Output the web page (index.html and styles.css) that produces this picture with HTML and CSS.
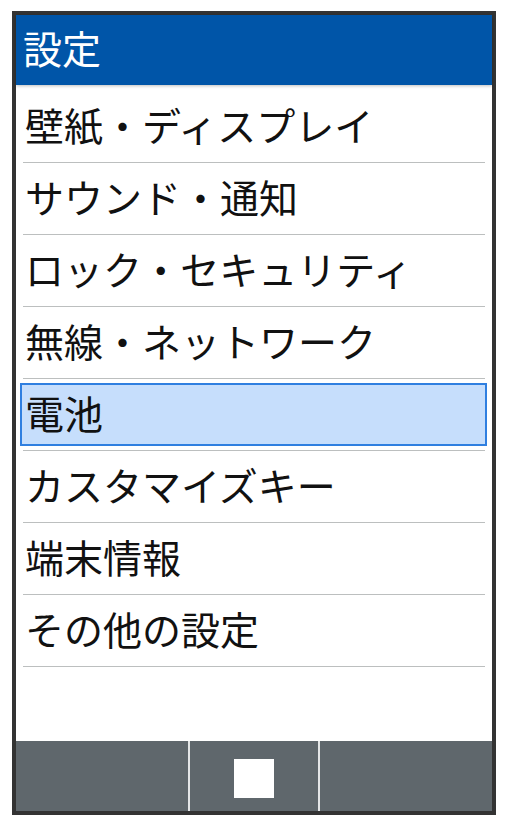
FILE: index.html
```html
<!DOCTYPE html>
<html lang="ja">
<head>
  <meta charset="UTF-8">
  <meta name="viewport" content="width=device-width, initial-scale=1.0">
  <title>設定</title>
  <link rel="stylesheet" href="styles.css">
</head>
<body>
  <div class="phone">
    <header class="title-bar">
      <h1>設定</h1>
    </header>

    <ul class="menu">
      <li class="menu-item"><span>壁紙・ディスプレイ</span></li>
      <li class="menu-item"><span>サウンド・通知</span></li>
      <li class="menu-item"><span>ロック・セキュリティ</span></li>
      <li class="menu-item"><span>無線・ネットワーク</span></li>
      <li class="menu-item selected"><span>電池</span></li>
      <li class="menu-item"><span>カスタマイズキー</span></li>
      <li class="menu-item"><span>端末情報</span></li>
      <li class="menu-item"><span>その他の設定</span></li>
    </ul>

    <footer class="soft-keys">
      <div class="soft-key"></div>
      <div class="soft-key center"><span class="stop-icon"></span></div>
      <div class="soft-key"></div>
    </footer>
  </div>
</body>
</html>
```

FILE: styles.css
```css
* {
  box-sizing: border-box;
  margin: 0;
  padding: 0;
}

body {
  font-family: "Noto Sans CJK JP", "Noto Sans", sans-serif;
  background-color: #ffffff;
  width: 507px;
  height: 826px;
  padding: 11px 0 0 12px;
}

.phone {
  width: 484px;
  height: 804px;
  border: 4px solid #333333;
  display: flex;
  flex-direction: column;
  background: #ffffff;
}

.title-bar {
  height: 70px;
  background-color: #0055a8;
  display: flex;
  align-items: center;
  padding: 0 0 5px 7px;
  box-shadow: 0 1px 3px rgba(0, 0, 0, 0.25);
  position: relative;
  z-index: 1;
}

.title-bar h1 {
  color: #ffffff;
  font-size: 39px;
  font-weight: 400;
  line-height: 1;
}

.menu {
  flex: 1;
  list-style: none;
  padding: 6px 7px 0;
}

.menu-item {
  height: 72px;
  border-bottom: 1px solid #bcbfbf;
  display: flex;
  align-items: center;
  padding: 0 0 4px 2px;
  font-size: 39px;
  line-height: 1;
  color: #111111;
}

.menu-item.selected {
  padding: 4px 0;
  align-items: stretch;
}

.menu-item.selected span {
  flex: 1;
  margin: 0 -2px 0 -3px;
  padding: 0 0 4px 3px;
  background-color: #c6defc;
  border: 2px solid #2f7fe0;
  display: flex;
  align-items: center;
}

.soft-keys {
  height: 70px;
  background-color: #5f676c;
  display: flex;
}

.soft-key {
  flex: 1;
  display: flex;
  align-items: center;
  justify-content: center;
}

.soft-key.center {
  flex: 0 0 132px;
  padding-top: 4px;
  border-left: 2px solid #e4e6e7;
  border-right: 2px solid #e4e6e7;
}

.stop-icon {
  width: 40px;
  height: 39px;
  background-color: #ffffff;
}
```
